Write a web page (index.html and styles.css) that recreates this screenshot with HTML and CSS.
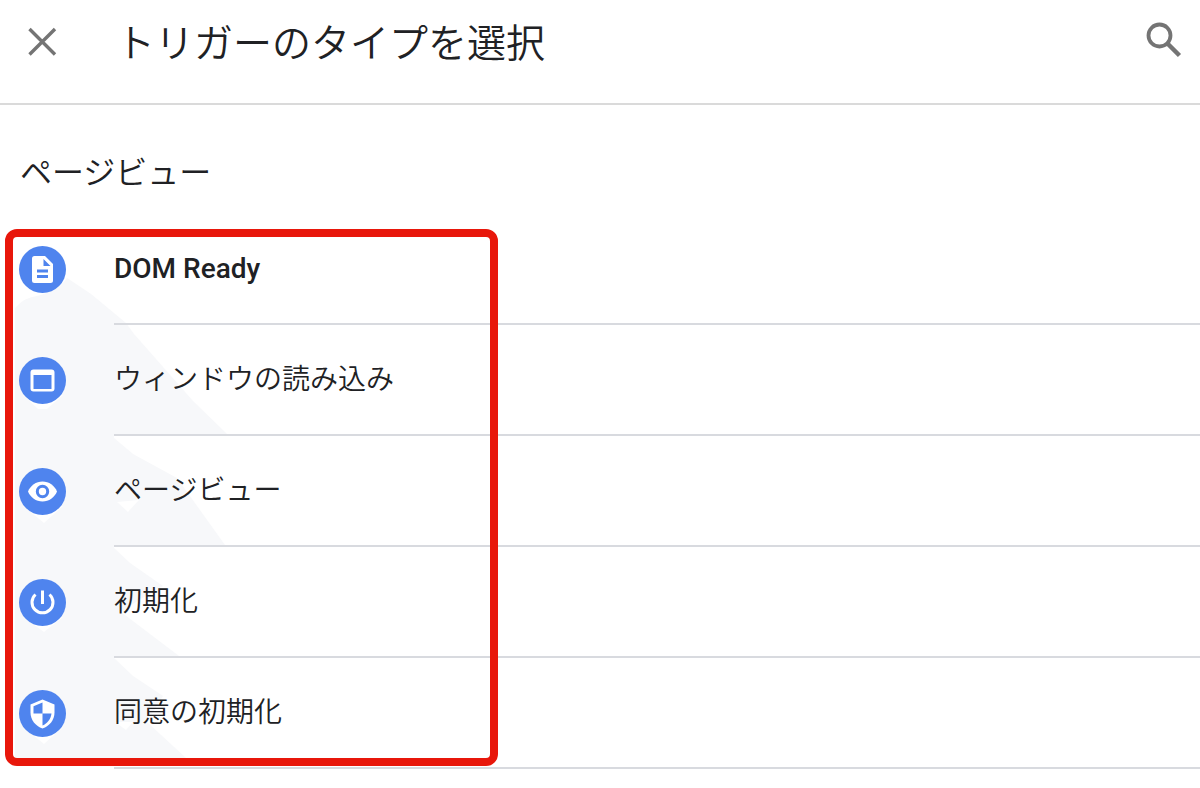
FILE: index.html
```html
<!DOCTYPE html>
<html lang="ja">
<head>
<meta charset="utf-8">
<meta name="viewport" content="width=device-width, initial-scale=1">
<title>トリガーのタイプを選択</title>
<link rel="stylesheet" href="styles.css">
</head>
<body>
<header class="header">
  <button class="icon-button" type="button" aria-label="閉じる">
    <svg width="36" height="36" viewBox="0 0 36 36" fill="none" stroke="#747474" stroke-width="3.400"><path d="M5.500 5 31 30.500M31 5 5.500 30.500"/></svg>
  </button>
  <h1 class="title">トリガーのタイプを選択</h1>
  <button class="icon-button" type="button" aria-label="検索">
    <svg width="40" height="40" viewBox="0 0 40 40" fill="none" stroke="#747474"><circle cx="15.500" cy="15.500" r="11" stroke-width="3.800"/><path d="M24 24 35.500 35.500" stroke-width="4.500"/></svg>
  </button>
</header>
<main>
  <h2 class="section-title">ページビュー</h2>
  <div class="list-wrap">
    <svg class="shade" width="480" height="524" viewBox="0 0 480 524" aria-hidden="true">
      <g fill="#f7f8fa">
        <path d="M2 72Q12 61 24 60Q46 54 54 42L78 58 113 87H101V524H2Z"/>
        <path d="M101 87H113L121 98 180 165 214 198H101Z"/>
        <path d="M101 202 120 218 164 242 212 309H101Z"/>
        <path d="M101 312 117 327 150 350 126 364 108 376 166 420H101Z"/>
        <path d="M101 422 120 440 150 460 134 486 173 522V524H101Z"/>
      </g>
      <path fill="#fff" d="M10 159H50L34 173H25ZM10 270H50L31 287ZM10 381H50L31 396ZM10 491H50L31 508ZM104 266 115 276 126 264ZM102 486H120L113 494Z"/>
    </svg>
    <ul class="list">
      <li><button class="row" type="button">
        <svg class="badge" viewBox="0 0 47 47"><circle cx="23.500" cy="23.500" r="23.500" fill="#4f84ee"/><path fill="#fff" d="M15.500 10H26L34 18V34.500Q34 37 31.500 37H15.500Q13 37 13 34.500V12.500Q13 10 15.500 10Z"/><path fill="#4f84ee" d="M24.500 13V20H31.500ZM18 23.500H29V26.500H18ZM18 29H29V32H18Z"/></svg>
        <span class="label latin">DOM Ready</span></button></li>
      <li><button class="row" type="button">
        <svg class="badge" viewBox="0 0 47 47"><circle cx="23.500" cy="23.500" r="23.500" fill="#4f84ee"/><rect x="11.500" y="12.500" width="24" height="22" rx="3" fill="#fff"/><path fill="#4f84ee" d="M14.500 18H32.500V32H14.500Z"/></svg>
        <span class="label">ウィンドウの読み込み</span></button></li>
      <li><button class="row" type="button">
        <svg class="badge" viewBox="0 0 47 47"><circle cx="23.500" cy="23.500" r="23.500" fill="#4f84ee"/><path fill="#fff" d="M9 23.500C11.500 17.500 17 13.500 23.500 13.500S35.500 17.500 38 23.500C35.500 29.500 30 33.500 23.500 33.500S11.500 29.500 9 23.500Z"/><circle cx="23.500" cy="23.500" r="5.200" fill="#fff" stroke="#4f84ee" stroke-width="3"/></svg>
        <span class="label">ページビュー</span></button></li>
      <li><button class="row" type="button">
        <svg class="badge" viewBox="0 0 47 47"><circle cx="23.500" cy="23.500" r="23.500" fill="#4f84ee"/><path fill="none" stroke="#fff" stroke-width="3" d="M23.500 11.500V25M16.500 15.500A10.500 10.500 0 1 0 30.500 15.500"/></svg>
        <span class="label">初期化</span></button></li>
      <li><button class="row" type="button">
        <svg class="badge" viewBox="0 0 47 47"><circle cx="23.500" cy="23.500" r="23.500" fill="#4f84ee"/><path fill="#fff" d="M23.500 9.500 35.500 14.500V22.500C35.500 30 30.500 36 23.500 38.500 16.500 36 11.500 30 11.500 22.500V14.500Z"/><path fill="#4f84ee" d="M23.500 12.500V23.500H14.500V16.300ZM23.500 23.500H32.500C31.800 29 28.500 33.500 23.500 35.500Z"/></svg>
        <span class="label">同意の初期化</span></button></li>
    </ul>
    <div class="highlight"></div>
  </div>
</main>
</body>
</html>
```
FILE: styles.css
```css
* {
  box-sizing: border-box;
}

body {
  margin: 0;
  background: #fff;
  color: #202124;
  font-family: Roboto, "Noto Sans CJK JP", sans-serif;
}

button {
  border: 0;
  padding: 0;
  background: none;
  color: inherit;
  font: inherit;
  text-align: left;
  cursor: pointer;
}

.header {
  display: flex;
  align-items: flex-start;
  padding: 12px 16px 12px 24px;
  min-height: 105px;
  border-bottom: 2px solid #dadada;
}

.icon-button {
  display: flex;
  padding-top: 12px;
}

.icon-button:last-child {
  padding-top: 8px;
}

.title {
  flex: 1;
  margin: 0 0 0 56px;
  font-size: 39px;
  font-weight: 350;
  line-height: 64px;
}

.section-title {
  margin: 0;
  padding: 44px 20px 17px;
  font-size: 32px;
  font-weight: 350;
  line-height: 48px;
}

.list-wrap {
  position: relative;
}

.shade {
  position: absolute;
  top: 22px;
  left: 13px;
}

.list {
  position: relative;
  margin: 0;
  padding: 0;
  list-style: none;
}

.row {
  display: grid;
  grid-template-columns: 47px 1fr;
  align-items: center;
  gap: 48px;
  width: 100%;
  height: 111px;
  padding-left: 19px;
}

.badge {
  width: 47px;
  height: 47px;
}

.label {
  display: flex;
  align-items: center;
  height: 111px;
  padding-bottom: 6px;
  border-bottom: 2px solid #d8dadf;
  font-size: 28px;
  font-weight: 350;
}

.latin {
  padding-bottom: 0;
  font-weight: 500;
}

.highlight {
  position: absolute;
  top: 15px;
  bottom: 3px;
  left: 5px;
  width: 493px;
  border: 8px solid #e8170b;
  border-radius: 12px;
  pointer-events: none;
}
```
